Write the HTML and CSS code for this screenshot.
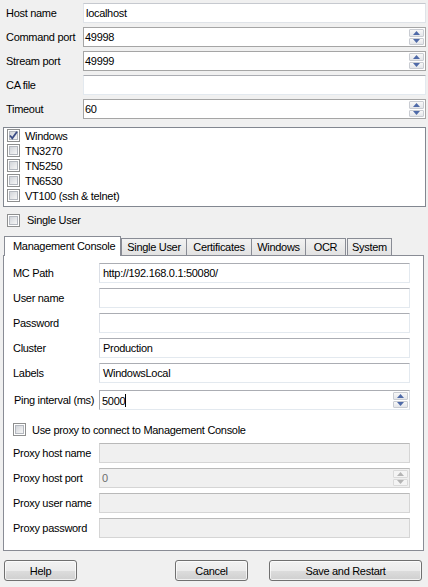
FILE: index.html
```html
<!DOCTYPE html>
<html>
<head>
<meta charset="utf-8">
<link rel="stylesheet" href="styles.css">
</head>
<body>
<div class="win">
  <div class="topform">
    <div class="lbl">Host name</div><div class="tb light"><span>localhost</span></div>
    <div class="lbl">Command port</div><div class="tb num"><span>49998</span><div class="spin"><div class="sb up"><svg width="7" height="4" viewBox="0 0 7 4"><path d="M0 4h7L3.5 0z" fill="#4f6aa8"/></svg></div><div class="sb dn"><svg width="7" height="4" viewBox="0 0 7 4"><path d="M0 0h7L3.5 4z" fill="#4f6aa8"/></svg></div></div></div>
    <div class="lbl">Stream port</div><div class="tb num"><span>49999</span><div class="spin"><div class="sb up"><svg width="7" height="4" viewBox="0 0 7 4"><path d="M0 4h7L3.5 0z" fill="#4f6aa8"/></svg></div><div class="sb dn"><svg width="7" height="4" viewBox="0 0 7 4"><path d="M0 0h7L3.5 4z" fill="#4f6aa8"/></svg></div></div></div>
    <div class="lbl">CA file</div><div class="tb"><span></span></div>
    <div class="lbl">Timeout</div><div class="tb num"><span>60</span><div class="spin"><div class="sb up"><svg width="7" height="4" viewBox="0 0 7 4"><path d="M0 4h7L3.5 0z" fill="#4f6aa8"/></svg></div><div class="sb dn"><svg width="7" height="4" viewBox="0 0 7 4"><path d="M0 0h7L3.5 4z" fill="#4f6aa8"/></svg></div></div></div>
  </div>

  <div class="listbox">
    <div class="item"><span class="cb checked"><svg width="9" height="9" viewBox="0 0 9 9"><path d="M1 4.5l2.3 2.8L8 0.8" stroke="#3c4d86" stroke-width="1.8" fill="none"/></svg></span><span>Windows</span></div>
    <div class="item"><span class="cb"></span><span>TN3270</span></div>
    <div class="item"><span class="cb"></span><span>TN5250</span></div>
    <div class="item"><span class="cb"></span><span>TN6530</span></div>
    <div class="item"><span class="cb"></span><span>VT100 (ssh &amp; telnet)</span></div>
  </div>

  <div class="single"><span class="cb"></span><span>Single User</span></div>

  <div class="tabs">
    <div class="tab sel t1">Management Console</div>
    <div class="tab t2">Single User</div>
    <div class="tab t3">Certificates</div>
    <div class="tab t4">Windows</div>
    <div class="tab t5">OCR</div>
    <div class="tab t6">System</div>
  </div>
  <div class="panel">
    <div class="pform">
      <div class="plbl">MC Path</div><div class="tb2"><span>http://192.168.0.1:50080/</span></div>
      <div class="plbl">User name</div><div class="tb2"><span></span></div>
      <div class="plbl">Password</div><div class="tb2"><span></span></div>
      <div class="plbl">Cluster</div><div class="tb2"><span>Production</span></div>
      <div class="plbl">Labels</div><div class="tb2"><span>WindowsLocal</span></div>
    </div>
    <div class="pform pingrow">
      <div class="plbl ping">Ping interval (ms)</div><div class="tb2 num2"><span>5000<i class="caret"></i></span><div class="spin"><div class="sb up"><svg width="7" height="4" viewBox="0 0 7 4"><path d="M0 4h7L3.5 0z" fill="#4f6aa8"/></svg></div><div class="sb dn"><svg width="7" height="4" viewBox="0 0 7 4"><path d="M0 0h7L3.5 4z" fill="#4f6aa8"/></svg></div></div></div>
    </div>
    <div class="proxy"><span class="cb"></span><span>Use proxy to connect to Management Console</span></div>
    <div class="pform pform2">
      <div class="plbl">Proxy host name</div><div class="tb2 dis"><span></span></div>
      <div class="plbl">Proxy host port</div><div class="tb2 dis num2"><span class="grey">0</span><div class="spin"><div class="sb up dsb"><svg width="7" height="4" viewBox="0 0 7 4"><path d="M0 4h7L3.5 0z" fill="#b4b4b4"/></svg></div><div class="sb dn dsb"><svg width="7" height="4" viewBox="0 0 7 4"><path d="M0 0h7L3.5 4z" fill="#b4b4b4"/></svg></div></div></div>
      <div class="plbl">Proxy user name</div><div class="tb2 dis"><span></span></div>
      <div class="plbl">Proxy password</div><div class="tb2 dis"><span></span></div>
    </div>
  </div>

  <div class="buttons">
    <div class="btn help">Help</div>
    <div class="btn cancel">Cancel</div>
    <div class="btn save">Save and Restart</div>
  </div>
</div>
</body>
</html>
```
FILE: styles.css
```css
* { box-sizing: border-box; }
html, body { margin: 0; padding: 0; }
body {
  background: #f0f0f0;
  font-family: "Liberation Sans", Arial, sans-serif;
  font-size: 11px;
  letter-spacing: -0.3px;
  color: #000;
}
.win { width: 428px; height: 587px; overflow: hidden; }

.topform {
  display: grid;
  grid-template-columns: 77px 343px;
  grid-auto-rows: 20px;
  row-gap: 4px;
  padding: 3px 0 0 6px;
}
.lbl { display: flex; align-items: center; white-space: nowrap; }
.tb {
  position: relative;
  background: #fff;
  border: 1px solid #e3e9ef;
  border-top-color: #abadb3;
  display: flex; align-items: center;
  padding-left: 2px;
}
.tb.light { border-color: #dfe3e8; border-top-color: #c6c9cf; }
.tb.num { border: 1px solid #a5a5a5; padding-left: 1px; }
.spin {
  position: absolute; right: 1px; top: 1px; bottom: 1px;
  width: 15px;
  display: flex; flex-direction: column; gap: 1px;
}
.sb {
  flex: 1;
  display: flex; align-items: center; justify-content: center;
  background: linear-gradient(#f8f8f8, #e4e6ea);
  border: 1px solid #c9ccd2;
  border-radius: 1px;
}
.sb.dsb { background: #f4f4f4; border-color: #dadada; }

.listbox {
  margin: 8px 0 0 3px;
  width: 423px;
  height: 80px;
  background: #fff;
  border: 1px solid #828790;
}
.item {
  height: 15px;
  display: flex; align-items: center;
  padding-left: 3px;
  gap: 5px;
}
.cb {
  width: 13px; height: 13px;
  border: 1px solid #8e8f8f;
  background: #fff;
  display: inline-flex; align-items: center; justify-content: center;
  position: relative;
  flex: none;
}
.cb::before {
  content: "";
  position: absolute; left: 1px; top: 1px; right: 1px; bottom: 1px;
  border: 1px solid #b4b8bf;
  background: linear-gradient(135deg, #d2d5da, #f6f6f6);
}
.cb svg { position: relative; z-index: 1; }

.single {
  display: flex; align-items: center; gap: 7px;
  margin: 6px 0 0 7px;
  height: 14px;
}

.tabs {
  display: flex; align-items: flex-end;
  margin: 9px 0 0 4px;
  height: 19px;
  position: relative;
  z-index: 2;
}
.tab {
  height: 17px;
  border: 1px solid #898c95;
  border-bottom: none;
  background: linear-gradient(#f2f2f2, #e2e2e2);
  display: flex; align-items: center; justify-content: center;
  margin-left: -1px;
  white-space: nowrap;
}
.tab.sel {
  height: 20px;
  background: #fff;
  margin-left: 0;
  margin-bottom: -1px;
  justify-content: flex-start;
  padding-left: 8px;
  padding-bottom: 2px;
}
.t1 { width: 117px; }
.t2 { width: 66px; margin-left: 0; }
.t3 { width: 66px; }
.t4 { width: 55px; }
.t5 { width: 41px; }
.t6 { width: 45px; margin-left: 1px; }

.panel {
  margin-left: 3px;
  width: 421px;
  height: 296px;
  background: #fff;
  border: 1px solid #898c95;
  padding: 7px 0 0 9px;
}
.pform {
  display: grid;
  grid-template-columns: 86px 311px;
  grid-auto-rows: 20px;
  row-gap: 5px;
}
.pingrow { margin-top: 7px; }
.plbl { display: flex; align-items: center; white-space: nowrap; }
.plbl.ping { padding-left: 1px; }
.tb2 {
  position: relative;
  background: #fff;
  border: 1px solid #e3e9ef;
  border-top-color: #abadb3;
  border-left-color: #dbdfe6;
  display: flex; align-items: center;
  padding-left: 3px;
}
.tb2.num2 { border: 1px solid #abadb3; border-bottom-color: #e3e9ef; border-right-color: #dbdfe6; padding-left: 2px; }
.tb2.dis { background: #f0f0f0; border-color: #d5d5d5; border-top-color: #b9b9b9; }
.grey { color: #6d6d6d; }
.caret { display: inline-block; width: 1px; height: 13px; background: #000; vertical-align: -2px; }

.proxy {
  display: flex; align-items: center; gap: 6px;
  margin: 13px 0 0 0;
  height: 13px;
}
.pform2 { margin-top: 7px; }

.buttons {
  display: flex;
  margin: 9px 0 0 4px;
}
.btn {
  height: 21px;
  border: 1px solid #707070;
  border-radius: 3px;
  background: linear-gradient(#f2f2f2 0%, #ebebeb 50%, #dddddd 50%, #cfcfcf 100%);
  box-shadow: inset 0 0 0 1px rgba(255,255,255,0.7);
  display: flex; align-items: center; justify-content: center;
}
.help { width: 73px; }
.cancel { width: 73px; margin-left: 98px; }
.save { width: 153px; margin-left: 21px; }
```
